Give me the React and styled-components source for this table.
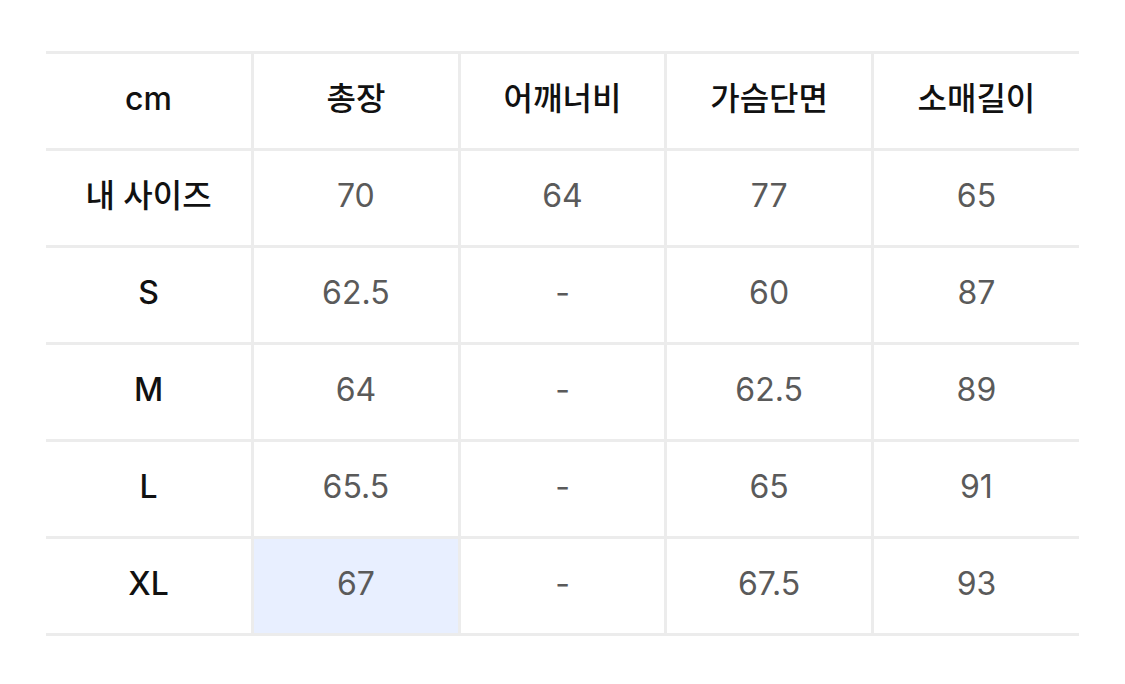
import React from "react"
import styled, { createGlobalStyle } from "styled-components"

const GlobalStyle = createGlobalStyle`
  body {
    margin: 0;
    background: #fff;
    font-family: Inter, "Noto Sans CJK KR", sans-serif;
  }
`

const headers = ["cm", "총장", "어깨너비", "가슴단면", "소매길이"]

const rows = [
  { size: "내 사이즈", values: ["70", "64", "77", "65"] },
  { size: "S", values: ["62.5", "-", "60", "87"] },
  { size: "M", values: ["64", "-", "62.5", "89"] },
  { size: "L", values: ["65.5", "-", "65", "91"] },
  { size: "XL", values: ["67", "-", "67.5", "93"], highlight: 0 },
]

const Page = styled.div`
  padding: 51px 46px 0 46px;
`

const Table = styled.table`
  width: 1033px;
  border-collapse: collapse;
  table-layout: fixed;
  border-top: 3px solid #ececec;
`

const Cell = styled.td`
  height: 90px;
  padding: 0 0 4px 0;
  text-align: center;
  vertical-align: middle;
  font-size: 32px;
  line-height: 1;
  font-weight: ${p => (p.$label ? 500 : 400)};
  color: ${p => (p.$label ? "#111" : "#5a5a5a")};
  background: ${p => (p.$active ? "#e8efff" : "#fff")};
  border-bottom: 3px solid #ececec;
  border-right: 3px solid #ececec;
  &:last-child {
    border-right: none;
  }
`

export default function App() {
  return (
    <>
      <GlobalStyle />
      <Page>
        <Table>
          <tbody>
            <tr>
              {headers.map(h => (
                <Cell key={h} $label>
                  {h}
                </Cell>
              ))}
            </tr>
            {rows.map(r => (
              <tr key={r.size}>
                <Cell $label>{r.size}</Cell>
                {r.values.map((v, i) => (
                  <Cell key={i} $active={r.highlight === i}>
                    {v}
                  </Cell>
                ))}
              </tr>
            ))}
          </tbody>
        </Table>
      </Page>
    </>
  )
}
